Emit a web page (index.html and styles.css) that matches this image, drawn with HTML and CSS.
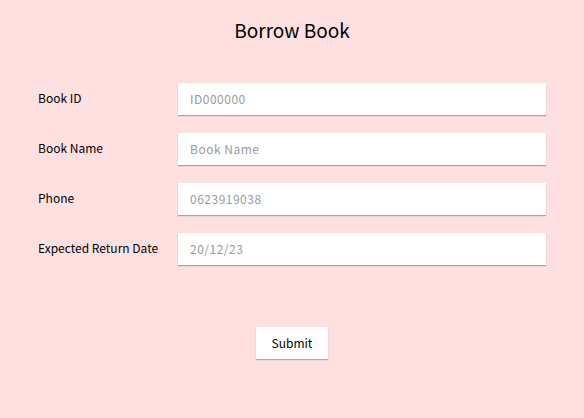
FILE: index.html
```html
<!DOCTYPE html>
<html>
<head>
<meta charset="utf-8">
<link rel="stylesheet" href="styles.css">
</head>
<body>
<div class="page">
  <h1 class="title">Borrow Book</h1>
  <form class="form">
    <div class="row">
      <label class="label">Book ID</label>
      <input class="field" type="text" placeholder="ID000000">
    </div>
    <div class="row">
      <label class="label">Book Name</label>
      <input class="field" type="text" placeholder="Book Name">
    </div>
    <div class="row">
      <label class="label">Phone</label>
      <input class="field" type="text" placeholder="0623919038">
    </div>
    <div class="row">
      <label class="label">Expected Return Date</label>
      <input class="field" type="text" placeholder="20/12/23">
    </div>
    <div class="actions">
      <button class="submit" type="button">Submit</button>
    </div>
  </form>
</div>
</body>
</html>
```
FILE: styles.css
```css
html, body {
  margin: 0;
  padding: 0;
  background: #ffe0e0;
}
body {
  font-family: "Noto Sans CJK KR", "Noto Sans", sans-serif;
  color: #000;
  width: 584px;
  height: 418px;
  overflow: hidden;
}
.page {
  padding-top: 15px;
}
.title {
  margin: 0;
  text-align: center;
  font-size: 19px;
  font-weight: 400;
  line-height: 30px;
}
.form {
  margin-top: 38px;
  padding-left: 38px;
  display: flex;
  flex-direction: column;
  gap: 17px;
}
.row {
  display: flex;
  align-items: center;
  height: 33px;
}
.label {
  width: 140px;
  font-size: 12px;
  line-height: 16px;
  font-weight: 400;
  margin-bottom: 3px;
}
.field {
  box-sizing: border-box;
  width: 368px;
  height: 32px;
  margin-bottom: 1px;
  border: none;
  outline: none;
  background: #fff;
  box-shadow: 0 1px 1px rgba(0,0,0,0.3);
  padding: 0 12px 2px;
  font-family: "Noto Sans CJK KR", "Noto Sans", sans-serif;
  font-size: 12px;
  letter-spacing: 0.5px;
}
.field::placeholder {
  color: #9a9a9a;
}
.actions {
  display: flex;
  justify-content: center;
  margin-top: 44px;
  padding-right: 38px;
}
.submit {
  width: 72px;
  height: 32px;
  border: none;
  background: #fff;
  box-shadow: 0 1px 1px rgba(0,0,0,0.25);
  font-family: "Noto Sans CJK KR", "Noto Sans", sans-serif;
  font-size: 12px;
  font-weight: 400;
  color: #000;
  padding: 0 0 2px;
}
```
